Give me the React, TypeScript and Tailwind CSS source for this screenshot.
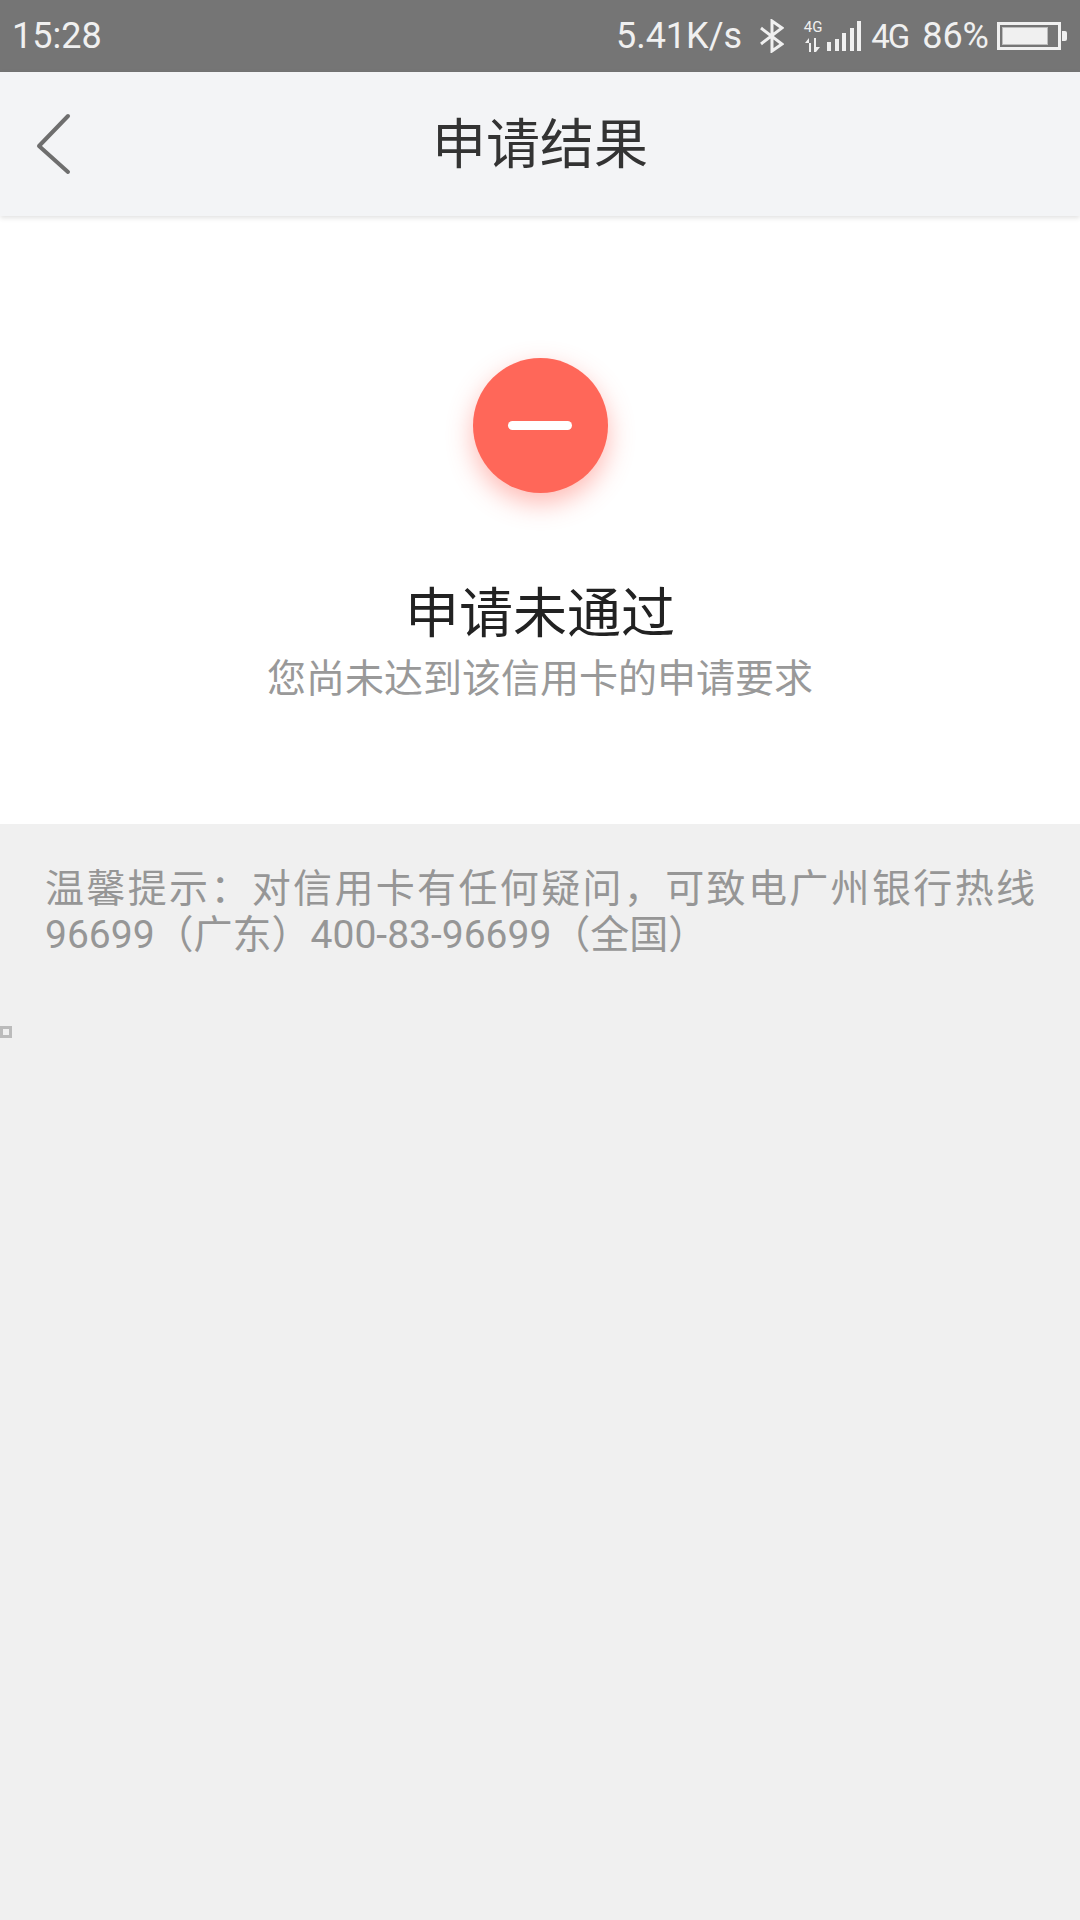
const font = { fontFamily: '"Roboto", "Noto Sans CJK SC", sans-serif' }

const StatusBar = () => (
    <div className="flex h-[72px] items-center justify-between bg-[#757575] pl-[12px] pr-[13px] text-[#f0f0f0]">
        <span className="text-[36px] leading-none">15:28</span>
        <div className="flex items-center">
            <span className="text-[36px] leading-none">5.41K/s</span>
            <svg width="24" height="34" viewBox="0 0 24 34" fill="none" stroke="#f0f0f0" strokeWidth="3" className="ml-[18px]">
                <path d="M1 9 L22 25 L12 32 L12 2 L22 9 L1 25" />
            </svg>
            <div className="ml-[20px] flex w-[18px] flex-col items-center">
                <span className="text-[15px] leading-[15px]">4G</span>
                <svg width="16" height="14" viewBox="0 0 16 14" fill="#f0f0f0" className="mt-[3px]">
                    <path d="M0 5 L4 0 L4 14 L6 14 L6 5 Z M9 0 L11 0 L11 9 L15 9 L11 14 L9 14 Z" />
                </svg>
            </div>
            <div className="ml-[5px] flex items-end gap-[3.5px]">
                <div className="h-[9px] w-[4px] bg-[#f0f0f0]" />
                <div className="h-[12px] w-[4px] bg-[#f0f0f0]" />
                <div className="h-[18px] w-[4px] bg-[#f0f0f0]" />
                <div className="h-[23px] w-[4px] bg-[#f0f0f0]" />
                <div className="h-[30px] w-[4px] bg-[#f0f0f0]" />
            </div>
            <span className="ml-[10px] text-[33px] leading-none tracking-[-2px]">4G</span>
            <span className="ml-[14px] text-[36px] leading-none">86%</span>
            <div className="ml-[8px] flex items-center">
                <div className="flex h-[28px] w-[64px] items-center border-[3px] border-[#f0f0f0] p-[2px]">
                    <div className="h-full w-[86%] border border-[#bdbdbd] bg-[#f0f0f0]" />
                </div>
                <div className="ml-[1px] h-[10px] w-[5px] rounded-r-[2px] bg-[#f0f0f0]" />
            </div>
        </div>
    </div>
)

const Header = () => (
    <div className="relative flex h-[144px] items-center justify-center bg-[#f3f4f6] shadow-[0_2px_5px_rgba(0,0,0,0.12)]">
        <svg width="40" height="64" viewBox="0 0 40 64" fill="none" stroke="#6e6e6e" strokeWidth="4" strokeLinecap="round" strokeLinejoin="round" className="absolute left-[34px] top-[41px]">
            <path d="M34 3 L5 33 L34 59" />
        </svg>
        <h1 className="pt-[4px] text-[54px] font-normal leading-none text-[#333333]">申请结果</h1>
    </div>
)

export default function App() {
    return (
        <div className="relative flex min-h-[1920px] w-[1080px] flex-col bg-[#f0f0f0]" style={font}>
            <StatusBar />
            <Header />
            <div className="flex h-[608px] flex-col items-center bg-white pt-[142px]">
                <div className="flex h-[135px] w-[135px] items-center justify-center rounded-full bg-[#ff6759] shadow-[0_10px_26px_rgba(255,102,88,0.45)]">
                    <div className="h-[9px] w-[64px] rounded-full bg-white" />
                </div>
                <h2 className="mt-[95px] text-[54px] font-normal leading-none text-[#222222]">申请未通过</h2>
                <p className="mt-[18px] text-[39px] leading-none text-[#999999]">您尚未达到该信用卡的申请要求</p>
            </div>
            <div className="px-[45px] pt-[42px] text-[39px] leading-[46px] text-[#969696]">
                <p className="[text-align-last:justify]">温馨提示：对信用卡有任何疑问，可致电广州银行热线</p>
                <p>96699（广东）400-83-96699（全国）</p>
            </div>
            <div className="absolute left-0 top-[1026px] h-[12px] w-[12px] border-[3px] border-[#bbbbbb]" />
        </div>
    )
}
